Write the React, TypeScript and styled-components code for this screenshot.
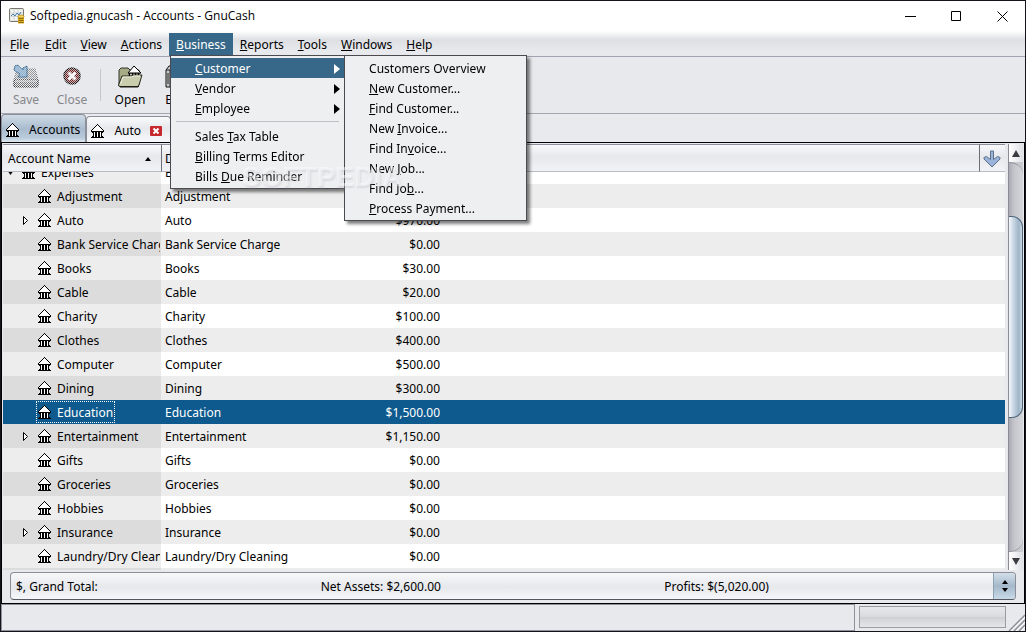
import React, { useLayoutEffect, useRef } from "react";
import styled, { createGlobalStyle, css } from "styled-components";

const GlobalStyle = createGlobalStyle`
  * { box-sizing: border-box; }
  body { margin: 0; background: #e8e9ed; }
  button { font: inherit; color: inherit; background: none; border: 0; padding: 0; margin: 0; text-align: left; }
  svg { display: block; flex: none; }
`;

const Shell = styled.div`
  display: flex;
  flex-direction: column;
  height: 100vh;
  position: relative;
  border: 1px solid #14141a;
  background: #e8e9ed;
  color: #000;
  font: 12px/16px "Noto Sans", Tahoma, sans-serif;
  white-space: nowrap;
  overflow: hidden;
`;

const TitleBar = styled.header`
  display: flex;
  align-items: center;
  height: 30px;
  padding-left: 8px;
  background: #fff;
`;

const Title = styled.h1`
  flex: 1;
  margin: 0 0 0 5px;
  font: 12px/16px "Open Sans", sans-serif;
`;

const WindowButton = styled.button`
  display: flex;
  align-items: center;
  justify-content: center;
  width: 46px;
  height: 28px;
`;

const MenuBar = styled.nav`
  display: flex;
  height: 26px;
  padding: 2px 0 0 2px;
  background: linear-gradient(#fff, #dddfe3 35%, #e8e9ed 80%);
  border-bottom: 1px solid #a2a2b0;
`;

const MenuSlot = styled.div`
  position: relative;
`;

const MenuButton = styled.button<{ $open?: boolean }>`
  height: 23px;
  min-width: 35px;
  padding: 0 7px;
  ${(p) => p.$open && css`background: #386889; color: #fff;`}
`;

const Popup = styled.div<{ $sub?: boolean }>`
  position: absolute;
  z-index: 5;
  top: ${(p) => (p.$sub ? "-3px" : "22px")};
  left: ${(p) => (p.$sub ? "100%" : "1px")};
  width: ${(p) => (p.$sub ? "183px" : "175px")};
  padding: 2px 0;
  border: 1px solid #4a4a50;
  background: #eeeff1;
  color: #000;
  box-shadow: 3px 3px 3px rgba(0, 0, 0, 0.5);
`;

const PopupRow = styled.div`
  position: relative;
`;

const PopupItem = styled.button<{ $active?: boolean }>`
  display: flex;
  align-items: center;
  justify-content: space-between;
  width: 100%;
  height: 20px;
  padding: 2px 4px 0 24px;
  ${(p) => p.$active && css`background: #386889; color: #fff;`}
`;

const PopupRule = styled.hr`
  height: 1px;
  margin: 3px 5px 4px;
  border: 0;
  background: #bfc0c6;
`;

const ToolBar = styled.div`
  display: flex;
  height: 57px;
  padding: 7px 0 0 2px;
  border-bottom: 1px solid #a4a5ae;
`;

const ToolButton = styled.button`
  display: flex;
  flex-direction: column;
  align-items: center;
  gap: 3px;
  height: 44px;
  min-width: 46px;
  padding: 0 7px;
  &:disabled { color: #85868a; }
`;

const ToolDivider = styled.span`
  width: 1px;
  height: 32px;
  margin: 5px 6px 5px 5px;
  background: #c6c7cb;
`;

const TabStrip = styled.div`
  display: flex;
  align-items: flex-end;
  height: 28px;
  background: #e8eaee;
`;

const Tab = styled.div<{ $active?: boolean }>`
  display: flex;
  align-items: center;
  height: ${(p) => (p.$active ? "28px" : "26px")};
  padding: 2px ${(p) => (p.$active ? "5px" : "8px")} 0 4px;
  border: 1px solid #8b8f99;
  border-bottom: 0;
  border-radius: 4px 4px 0 0;
  background: ${(p) =>
    p.$active ? "linear-gradient(#cfdbe6, #a9bccf 50%, #b9cbdb 85%, #dfe8f0)" : "linear-gradient(#fafafc, #e6e8ec 45%, #f7f8fa)"};
`;

const TabLabel = styled.button`
  display: flex;
  align-items: center;
  gap: 9px;
`;

const TabClose = styled.button`
  margin-left: 9px;
`;

const Page = styled.main`
  flex: 1;
  min-height: 0;
  display: flex;
  flex-direction: column;
  border: 1px solid #000;
`;

const ListArea = styled.div`
  flex: 1;
  min-height: 0;
  display: flex;
  gap: 3px;
  margin: 1px 1px 2px;
`;

const Viewport = styled.div`
  flex: 1;
  overflow: hidden;
`;

const Table = styled.table`
  width: 100%;
  table-layout: fixed;
  border-collapse: separate;
  border-spacing: 0;
`;

const NameCol = styled.col`width: 158px;`;
const TextCol = styled.col`width: 160px;`;
const SumCol = styled.col`width: 119px;`;
const ArrowCol = styled.col`width: 26px;`;

const HeadCell = styled.th<{ $first?: boolean; $line?: boolean }>`
  position: sticky;
  top: 0;
  z-index: 2;
  height: 28px;
  padding: 2px 0 0 ${(p) => (p.$first ? "5px" : "3px")};
  border-top: 1px solid #8e929c;
  border-bottom: 1px solid #b9bac4;
  border-left: ${(p) => (p.$line ? "1px solid #6e6e76" : "0")};
  background: linear-gradient(#f8f8fa, #e6e8ec 45%, #f2f3f7);
  font-weight: normal;
  text-align: left;
`;

const HeadButton = styled.button`
  display: flex;
  align-items: center;
  justify-content: space-between;
  width: 100%;
  padding-right: 10px;
`;

const Row = styled.tr<{ $selected?: boolean }>`
  background: #fff;
  & > td:first-child { background: #ededed; }
  &:nth-child(even) { background: #ededed; }
  &:nth-child(even) > td:first-child { background: #dcdcdc; }
  ${(p) => p.$selected && css`
    &&, &&& > td:first-child { background: #0e5a8e; color: #fff; }
  `}
`;

const Cell = styled.td<{ $right?: boolean }>`
  height: 24px;
  padding: 2px 0 0 4px;
  overflow: hidden;
  text-align: ${(p) => (p.$right ? "right" : "left")};
`;

const NameCell = styled.td`
  height: 24px;
  padding: 0 1px 0 0;
`;

const NameLine = styled.div<{ $root?: boolean }>`
  display: flex;
  align-items: center;
  overflow: hidden;
  padding-left: ${(p) => (p.$root ? "1px" : "17px")};
`;

const Expander = styled.span`
  display: flex;
  flex: none;
  justify-content: center;
  width: 12px;
`;

const NameTag = styled.span<{ $focus?: boolean }>`
  display: flex;
  flex: none;
  align-items: center;
  gap: 5px;
  height: 22px;
  margin-left: 4px;
  padding: 0 1px;
  border: 1px dotted ${(p) => (p.$focus ? "#fff" : "transparent")};
`;

const NameText = styled.span`
  padding-top: 2px;
`;

const ScrollBar = styled.div`
  display: flex;
  flex-direction: column;
  width: 15px;
  border-left: 1px solid #8a8c95;
  background: #c9cbd1;
`;

const ScrollButton = styled.button`
  display: flex;
  align-items: center;
  justify-content: center;
  height: 18px;
  background: linear-gradient(90deg, #fff, #dfe0e6);
`;

const ScrollTrack = styled.div`
  flex: 1;
  display: flex;
  flex-direction: column;
  background: linear-gradient(90deg, #a9abb2, #c3c5cb 35%, #d6d7dc);
  border: solid #91939b;
  border-width: 1px 0;
  border-radius: 0 13px 13px 0;
`;

const ScrollThumb = styled.div`
  flex: 202;
  border: 1px solid #4c6478;
  border-left: 0;
  border-radius: 0 11px 11px 0;
  background: linear-gradient(90deg, #f2f7fb, #c2d2e0 40%, #9fb4c8 75%, #c9d8e4);
`;

const TrackSpace = styled.div<{ $grow: number }>`
  flex: ${(p) => p.$grow};
`;

const Summary = styled.button`
  display: grid;
  grid-template-columns: 305fr 344fr 329fr 22px;
  align-items: center;
  height: 28px;
  margin: 0 8px 3px;
  padding-left: 5px;
  border: 1px solid #8b8d99;
  border-bottom-color: #55565f;
  border-radius: 4px;
  background: linear-gradient(#f8f8fa, #e6e8ec 55%, #f6f7fa);
  overflow: hidden;
`;

const SummaryText = styled.span`
  padding-top: 2px;
`;

const SummaryArrows = styled.span`
  display: flex;
  align-items: center;
  justify-content: center;
  align-self: stretch;
  border-left: 1px solid #8ca2b5;
  background: linear-gradient(#d3dfe9, #a5b9cb 50%, #c9dbe8);
`;

const StatusBar = styled.footer`
  display: flex;
  height: 27px;
  background: #e8e9ed;
`;

const StatusText = styled.div`
  flex: 1;
  border: 1px solid #8f909b;
`;

const Progress = styled.div`
  width: 147px;
  margin: 2px 2px 3px 4px;
  border: 1px solid #9a9ba3;
  background: linear-gradient(#e9e9ec, #d9dadd 48%, #cfd0d4 52%, #e6e7ea);
`;

const Grip = styled.div`
  display: flex;
  align-items: flex-end;
`;

const Watermark = styled.span`
  position: absolute;
  z-index: 9;
  left: 241px;
  top: 160px;
  font: bold 28px/32px "Liberation Sans", sans-serif;
  color: rgba(255, 255, 255, 0.45);
  text-shadow: 1px 2px 2px rgba(180, 180, 188, 0.35);
  pointer-events: none;
`;

const BANK = [
  "      #      ",
  "     #o#     ",
  "    #ooo#    ",
  "   #ooooo#   ",
  "  #ooooooo#  ",
  " #ooooooooo# ",
  "#ooooooooooo#",
  "#############",
  " ##o##o##o## ",
  "  #o##o##o#  ",
  "  #o##o##o#  ",
  "  #o##o##o#  ",
  " ##o##o##o## ",
  "#############",
];

const trace = (rows: string[], mark: string) =>
  rows.map((r, y) => [...r].map((c, x) => (c === mark ? `M${x} ${y}h1v1h-1z` : "")).join("")).join("");

const bankInk = trace(BANK, "#");
const bankFill = trace(BANK, "o");

const BankIcon = () => (
  <svg width="14" height="14" viewBox="0 0 14 14" shapeRendering="crispEdges" aria-hidden="true">
    <path d={bankFill} fill="#fff" />
    <path d={bankInk} fill="#000" />
  </svg>
);

const AppIcon = () => (
  <svg width="16" height="16" viewBox="0 0 16 16" aria-hidden="true">
    <rect x="0.5" y="0.5" width="14" height="13" rx="1" fill="#e4e4e0" stroke="#77776f" />
    <rect x="2" y="2" width="11" height="10" fill="#f4f5f5" />
    <path d="M2 5h11M2 8.5h11M5 2v10M9 2v10" stroke="#cdd2d5" />
    <path d="M2 8l2-2 2 2 2-3 2 2 2-3" fill="none" stroke="#4479a8" />
    <path d="M9 9h6v6.500H9z" fill="#dcae24" />
    <path d="M9.500 10.500h5M9.500 12.500h5M9.500 14.500h5" stroke="#8f6b08" />
    <ellipse cx="12" cy="8.500" rx="3" ry="1.500" fill="#f5d65a" stroke="#a7810f" strokeWidth="0.700" />
  </svg>
);

const Hatch = () => (
  <defs>
    <pattern id="hatch" width="2" height="2" patternUnits="userSpaceOnUse">
      <path d="M0 0h1v1H0zM1 1h1v1H1z" fill="#e8e9ed" shapeRendering="crispEdges" />
    </pattern>
  </defs>
);

const SaveIcon = () => (
  <svg width="26" height="25" viewBox="0 0 26 25" aria-hidden="true">
    <Hatch />
    <path d="M4 5h18l3 11v6H1v-6z" fill="#999" stroke="#777" />
    <path d="M1 16h24v6q0 1-1 1H2q-1 0-1-1z" fill="#777" stroke="#222" />
    <path d="M2 17h22" stroke="#eee" />
    <path d="M0 0h26v25H0z" fill="url(#hatch)" />
    <path d="M2 2l3-1 5 5V4l4-2v11H5l2-3L1 6z" fill="#8fb2d0" stroke="#2f628c" />
    <path d="M0 0h16v15H0z" fill="url(#hatch)" opacity=".4" />
  </svg>
);

const CloseIcon = () => (
  <svg width="26" height="25" viewBox="0 0 26 25" aria-hidden="true">
    <circle cx="13" cy="12" r="8" fill="#6e1f1f" stroke="#111" strokeWidth="1.500" />
    <path d="M9.500 8.500l7 7M16.500 8.500l-7 7" stroke="#fff" strokeWidth="3" />
    <path d="M0 0h26v25H0z" fill="url(#hatch)" opacity=".75" />
  </svg>
);

const OpenIcon = () => (
  <svg width="26" height="25" viewBox="0 0 26 25" aria-hidden="true">
    <path d="M2 20V6l2-2h7l2 2h9v15H3z" fill="#a7ab86" stroke="#32352a" />
    <path d="M11 9L17 2l7 7z" fill="#fff" stroke="#000" />
    <path d="M12 10h11v4H12z" fill="#fff" />
    <path d="M12.500 9v5M15.500 9v5M18.500 9v5M21.500 9v5" stroke="#000" strokeWidth="1.500" />
    <path d="M1.500 21L5 12h9l2-1h9l-3 10q-.5 1.500-2 1.500H3q-1.500 0-1.500-1.500z" fill="#c9ccad" stroke="#26281f" />
    <path d="M3.500 20L6 13h8.500l2-1H23" fill="none" stroke="#eff0df" />
    <path d="M3 23h18l1-1" fill="none" stroke="#15160f" />
  </svg>
);

const EditIcon = () => (
  <svg width="26" height="25" viewBox="0 0 26 25" aria-hidden="true">
    <path d="M3 6l3-4h16v18l-3 3H3z" fill="#c9cacb" stroke="#111" />
    <path d="M3 6h16v17M19 6l3-4M7 6v17M5 9v11" fill="none" stroke="#222" />
  </svg>
);

const Triangle = ({ d, w = 6, h = 10, fill = "currentColor", stroke }: { d: string; w?: number; h?: number; fill?: string; stroke?: string }) => (
  <svg width={w} height={h} viewBox={`0 0 ${w} ${h}`} aria-hidden="true">
    <path d={d} fill={fill} stroke={stroke} />
  </svg>
);

/* An underscore goes before the letter that is the item's access key. */
const Mnemonic = ({ text }: { text: string }) => {
  const [before, after] = text.split("_");
  if (after === undefined) return <span>{before}</span>;
  return (
    <span>
      {before}
      <u>{after[0]}</u>
      {after.slice(1)}
    </span>
  );
};

const CUSTOMER_ITEMS = [
  "Customers Overview",
  "_New Customer...",
  "_Find Customer...",
  "New _Invoice...",
  "Find In_voice...",
  "New _Job...",
  "Find Jo_b...",
  "_Process Payment...",
];

const MENUS = ["_File", "_Edit", "_View", "_Actions", "_Business", "_Reports", "_Tools", "_Windows", "_Help"];

const subArrow = <Triangle d="M0 0l6 5-6 5z" />;

const BusinessMenu = () => (
  <Popup role="menu">
    <PopupRow>
      <PopupItem role="menuitem" $active>
        <Mnemonic text="_Customer" />
        {subArrow}
      </PopupItem>
      <Popup role="menu" $sub>
        {CUSTOMER_ITEMS.map((t) => (
          <PopupItem role="menuitem" key={t}>
            <Mnemonic text={t} />
          </PopupItem>
        ))}
      </Popup>
    </PopupRow>
    <PopupItem role="menuitem"><Mnemonic text="_Vendor" />{subArrow}</PopupItem>
    <PopupItem role="menuitem"><Mnemonic text="_Employee" />{subArrow}</PopupItem>
    <PopupRule />
    <PopupItem role="menuitem"><Mnemonic text="Sales _Tax Table" /></PopupItem>
    <PopupItem role="menuitem"><Mnemonic text="_Billing Terms Editor" /></PopupItem>
    <PopupItem role="menuitem"><Mnemonic text="Bills _Due Reminder" /></PopupItem>
  </Popup>
);

type Account = { name: string; total?: string; kind?: "root" | "parent"; selected?: boolean };

const ACCOUNTS: Account[] = [
  { name: "Expenses", kind: "root" },
  { name: "Adjustment" },
  { name: "Auto", total: "$970.00", kind: "parent" },
  { name: "Bank Service Charge", total: "$0.00" },
  { name: "Books", total: "$30.00" },
  { name: "Cable", total: "$20.00" },
  { name: "Charity", total: "$100.00" },
  { name: "Clothes", total: "$400.00" },
  { name: "Computer", total: "$500.00" },
  { name: "Dining", total: "$300.00" },
  { name: "Education", total: "$1,500.00", selected: true },
  { name: "Entertainment", total: "$1,150.00", kind: "parent" },
  { name: "Gifts", total: "$0.00" },
  { name: "Groceries", total: "$0.00" },
  { name: "Hobbies", total: "$0.00" },
  { name: "Insurance", total: "$0.00", kind: "parent" },
  { name: "Laundry/Dry Cleaning", total: "$0.00" },
];

const AccountRow = ({ name, total, kind, selected }: Account) => (
  <Row $selected={selected} aria-selected={selected}>
    <NameCell>
      <NameLine $root={kind === "root"}>
        <Expander>
          {kind === "parent" && <Triangle d="M.5 .5l4 4-4 4z" h={9} fill="#fff" stroke="#000" />}
          {kind === "root" && <Triangle d="M0 0h7l-3.500 5z" w={7} h={5} />}
        </Expander>
        <NameTag $focus={selected}>
          <BankIcon />
          <NameText>{name}</NameText>
        </NameTag>
      </NameLine>
    </NameCell>
    <Cell>{name}</Cell>
    <Cell $right>{total}</Cell>
    <Cell />
    <Cell />
  </Row>
);

const AccountTable = () => {
  const view = useRef<HTMLDivElement>(null);
  useLayoutEffect(() => {
    if (view.current) view.current.scrollTop = 12;
  }, []);
  return (
    <Viewport ref={view}>
      <Table>
        <colgroup>
          <NameCol />
          <TextCol />
          <SumCol />
          <col />
          <ArrowCol />
        </colgroup>
        <thead>
          <tr>
            <HeadCell $first>
              <HeadButton>
                Account Name
                <Triangle d="M0 4l3-4 3 4z" h={4} />
              </HeadButton>
            </HeadCell>
            <HeadCell $line>Description</HeadCell>
            <HeadCell />
            <HeadCell />
            <HeadCell $line>
              <HeadButton aria-label="Choose columns">
                <svg width="18" height="18" viewBox="0 0 18 18" aria-hidden="true">
                  <path
                    d="M7.500 1h3v8.500L14.500 6.500l2.500 1v1.500L9 17 1 9V7.500l2.500-1 4 3z"
                    fill="#9bb3d8"
                    stroke="#5b6f8f"
                    strokeLinejoin="round"
                  />
                </svg>
              </HeadButton>
            </HeadCell>
          </tr>
        </thead>
        <tbody>
          {ACCOUNTS.map((a) => (
            <AccountRow key={a.name} {...a} />
          ))}
          <Row>
            <Cell />
            <Cell />
            <Cell />
            <Cell />
            <Cell />
          </Row>
        </tbody>
      </Table>
    </Viewport>
  );
};

export default function App() {
  return (
    <>
      <GlobalStyle />
      <Shell>
        <TitleBar>
          <AppIcon />
          <Title>Softpedia.gnucash - Accounts - GnuCash</Title>
          <WindowButton aria-label="Minimize">
            <svg width="11" height="11"><path d="M0 5.500h11" stroke="#000" /></svg>
          </WindowButton>
          <WindowButton aria-label="Maximize">
            <svg width="11" height="11"><path d="M.5 .5h9v9h-9z" fill="none" stroke="#000" /></svg>
          </WindowButton>
          <WindowButton aria-label="Close window">
            <svg width="11" height="11"><path d="M.5 .5l10 10M10.500 .5l-10 10" stroke="#000" /></svg>
          </WindowButton>
        </TitleBar>

        <MenuBar>
          {MENUS.map((m) => (
            <MenuSlot key={m}>
              <MenuButton $open={m === "_Business"}>
                <Mnemonic text={m} />
              </MenuButton>
              {m === "_Business" && <BusinessMenu />}
            </MenuSlot>
          ))}
        </MenuBar>

        <ToolBar>
          <ToolButton disabled><SaveIcon />Save</ToolButton>
          <ToolButton disabled><CloseIcon />Close</ToolButton>
          <ToolDivider />
          <ToolButton><OpenIcon />Open</ToolButton>
          <ToolButton><EditIcon />Edit</ToolButton>
        </ToolBar>

        <TabStrip>
          <Tab $active>
            <TabLabel><BankIcon />Accounts</TabLabel>
          </Tab>
          <Tab>
            <TabLabel><BankIcon />Auto</TabLabel>
            <TabClose aria-label="Close tab">
              <svg width="12" height="10" viewBox="0 0 12 10">
                <rect width="12" height="10" rx="1" fill="#c4282d" />
                <path d="M3.500 2.500l5 5M8.500 2.500l-5 5" stroke="#fff" strokeWidth="2" />
              </svg>
            </TabClose>
          </Tab>
        </TabStrip>

        <Page>
          <ListArea>
            <AccountTable />
            <ScrollBar>
              <ScrollButton aria-label="Scroll up"><Triangle d="M0 7l4-7 4 7z" w={8} h={7} fill="#3b3b40" /></ScrollButton>
              <ScrollTrack>
                <TrackSpace $grow={54} />
                <ScrollThumb />
                <TrackSpace $grow={134} />
              </ScrollTrack>
              <ScrollButton aria-label="Scroll down"><Triangle d="M0 0l4 7 4-7z" w={8} h={7} fill="#3b3b40" /></ScrollButton>
            </ScrollBar>
          </ListArea>
          <Summary aria-haspopup="listbox">
            <SummaryText>$, Grand Total:</SummaryText>
            <SummaryText>Net Assets: $2,600.00</SummaryText>
            <SummaryText>Profits: $(5,020.00)</SummaryText>
            <SummaryArrows>
              <Triangle d="M0 4l3-4 3 4zM0 8l3 4 3-4z" h={12} />
            </SummaryArrows>
          </Summary>
        </Page>

        <StatusBar>
          <StatusText />
          <Progress role="progressbar" aria-label="Progress" />
          <Grip>
            <svg width="17" height="17" viewBox="0 0 17 17" aria-hidden="true">
              <path d="M1 17L17 1M6 17L17 6M11 17l6-6" stroke="#8f909a" strokeWidth="1.500" />
              <path d="M3 17L17 3M8 17l9-9M13 17l4-4" stroke="#fff" />
            </svg>
          </Grip>
        </StatusBar>
        <Watermark>SOFTPEDIA</Watermark>
      </Shell>
    </>
  );
}
